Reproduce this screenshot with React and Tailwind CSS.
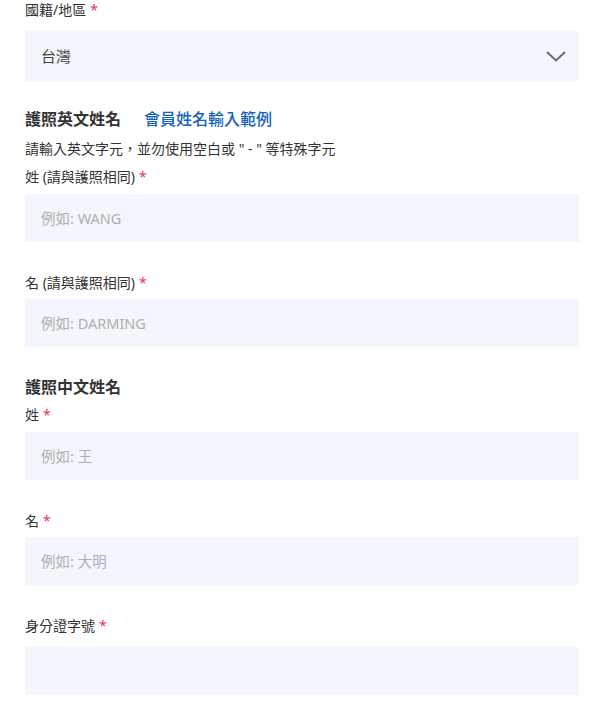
const FONT = { fontFamily: '"Noto Sans", "Noto Sans CJK TC", sans-serif' };

const Label = ({ children, required = true, className = '' }) => (
    <div className={`text-[14px] leading-[20px] text-[#333] ${className}`}>
        {children}
        {required && <span className="ml-1 text-[#e8336d]">*</span>}
    </div>
);

const Input = ({ placeholder, className = '' }) => (
    <input
        type="text"
        placeholder={placeholder}
        className={`block w-full h-[48px] px-4 bg-[#f3f6fd] text-[14.5px] text-[#333] placeholder:text-[#b0b0b0] outline-none ${className}`}
        style={FONT}
    />
);

const App = () => {
    return (
        <div className="min-h-screen bg-white pl-[25px] pr-[22px]" style={FONT}>
            {/* Nationality */}
            <Label>國籍/地區</Label>
            <div className="mt-[11px] h-[50px] bg-[#f3f6fd] flex items-center justify-between pl-4 pr-[13px]">
                <span className="text-[15px] text-[#444]">台灣</span>
                <svg width="20" height="11" viewBox="0 0 20 11" fill="none">
                    <path d="M1 1l9 8.5L19 1" stroke="#666" strokeWidth="1.8" />
                </svg>
            </div>

            {/* English name */}
            <div className="mt-[26px] flex items-center gap-[23px] leading-[24px]">
                <span className="text-[16px] font-bold text-[#333]">護照英文姓名</span>
                <a href="#" className="text-[16px] font-medium text-[#1462b8]">會員姓名輸入範例</a>
            </div>
            <div className="mt-[8px] text-[14px] leading-[20px] text-[#333]">
                請輸入英文字元，並勿使用空白或 " - " 等特殊字元
            </div>
            <Label className="mt-[8px]">姓 (請與護照相同)</Label>
            <Input className="mt-[7px]" placeholder="例如: WANG" />
            <Label className="mt-[31px]">名 (請與護照相同)</Label>
            <Input className="mt-[6px]" placeholder="例如: DARMING" />

            {/* Chinese name */}
            <div className="mt-[28px] text-[16px] leading-[24px] font-bold text-[#333]">護照中文姓名</div>
            <Label className="mt-[6px]">姓</Label>
            <Input className="mt-[7px]" placeholder="例如: 王" />
            <Label className="mt-[31px]">名</Label>
            <Input className="mt-[6px]" placeholder="例如: 大明" />

            {/* ID */}
            <Label className="mt-[31px]">身分證字號</Label>
            <Input className="mt-[11px]" />
        </div>
    );
};

export default App;
